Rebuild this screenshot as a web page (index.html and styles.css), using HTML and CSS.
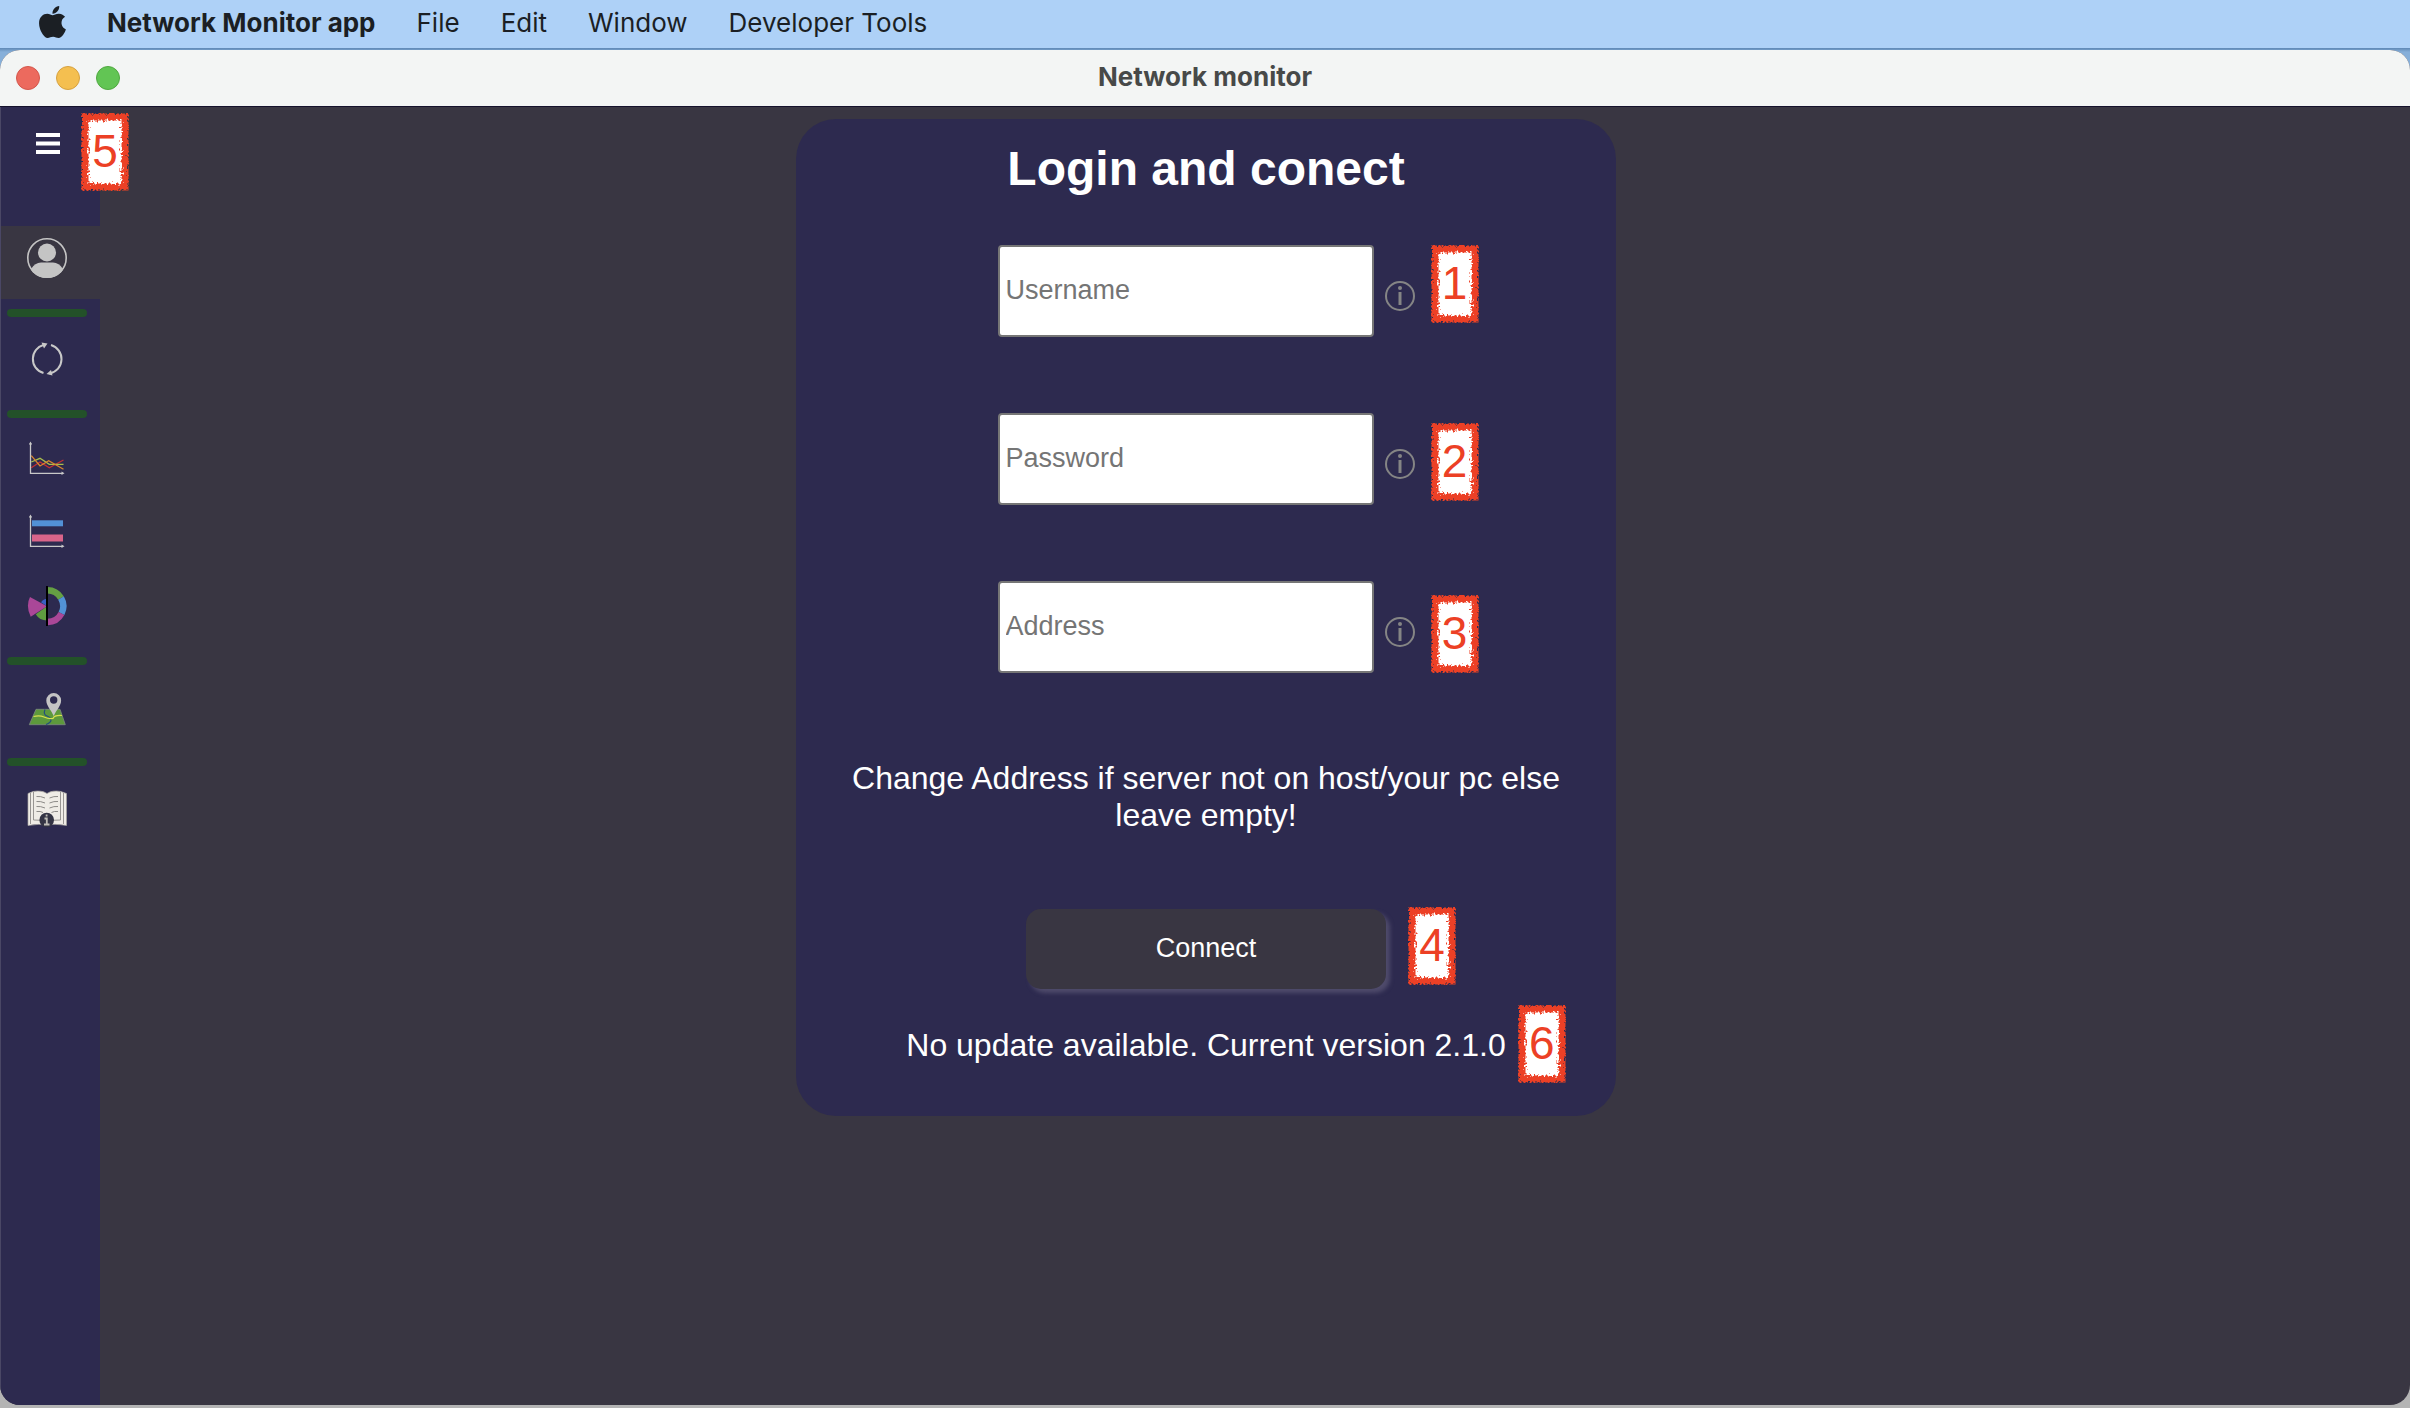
FILE: index.html
```html
<!DOCTYPE html>
<html lang="en">
<head>
<meta charset="utf-8">
<title>Network monitor</title>
<link rel="stylesheet" href="styles.css">
</head>
<body>
<svg class="defs" aria-hidden="true">
  <defs>
    <filter id="rough" x="-10%" y="-10%" width="120%" height="120%">
      <feTurbulence type="fractalNoise" baseFrequency="0.5" numOctaves="3" seed="4" result="n"/>
      <feDisplacementMap in="SourceGraphic" in2="n" scale="9" xChannelSelector="R" yChannelSelector="G"/>
    </filter>
    <symbol id="frame" viewBox="0 0 48 78">
      <g filter="url(#rough)">
        <rect x="4" y="4" width="40" height="70" fill="#fff"/>
        <rect x="4" y="4" width="40" height="70" fill="none" stroke="#ec4025" stroke-width="7"/>
      </g>
    </symbol>
    <symbol id="info" viewBox="0 0 30 30">
      <circle cx="15" cy="15" r="14" fill="none" stroke="#858585" stroke-width="2"/>
      <circle cx="15" cy="7" r="2" fill="#858585"/>
      <path d="M15 11v13" stroke="#858585" stroke-width="3"/>
    </symbol>
  </defs>
</svg>

<header class="menubar">
  <svg class="apple" viewBox="4 32 377 448" aria-hidden="true"><path fill="#1b1f24" d="M318.700 268.700c-.2-36.700 16.400-64.400 50-84.800-18.800-26.900-47.200-41.700-84.700-44.600-35.500-2.800-74.300 20.700-88.500 20.700-15 0-49.400-19.700-76.400-19.700C63.300 141.200 4 184.800 4 273.500q0 39.300 14.400 81.200c12.800 36.700 59 126.700 107.200 125.200 25.200-.6 43-17.900 75.800-17.900 31.800 0 48.300 17.900 76.400 17.900 48.600-.7 90.400-82.500 102.600-119.300-65.200-30.700-61.700-90-61.700-91.900zm-56.600-164.200c27.300-32.400 24.800-61.900 24-72.500-24.100 1.400-52 16.400-67.900 34.900-17.500 19.800-27.800 44.300-25.600 71.900 26.100 2 49.900-11.400 69.500-34.300z"/></svg>
  <button class="menu app-name" type="button">Network Monitor app</button>
  <button class="menu" type="button">File</button>
  <button class="menu" type="button">Edit</button>
  <button class="menu" type="button">Window</button>
  <button class="menu" type="button">Developer Tools</button>
</header>

<div class="window">
  <div class="titlebar">
    <div class="lights">
      <button class="light close" type="button" aria-label="Close"></button>
      <button class="light minimise" type="button" aria-label="Minimise"></button>
      <button class="light zoom" type="button" aria-label="Zoom"></button>
    </div>
    <div class="window-title">Network monitor</div>
  </div>

  <div class="workspace">
    <nav class="sidebar">
      <button class="toggle" type="button" aria-label="Toggle menu">
        <svg width="24" height="21" viewBox="0 0 24 21"><path d="M0 2h24M0 10.500h24M0 19h24" stroke="#fff" stroke-width="4"/></svg>
        <span class="badge badge-toggle"><svg><use href="#frame"/></svg><span>5</span></span>
      </button>
      <a class="item active" href="#account" aria-label="Account">
        <svg viewBox="0 0 40 40">
          <clipPath id="disc"><circle cx="20" cy="20" r="20"/></clipPath>
          <circle cx="20" cy="20" r="19.200" fill="none" stroke="#c4c4c4" stroke-width="1.600"/>
          <circle cx="20" cy="14.500" r="9" fill="#c4c4c4"/>
          <path clip-path="url(#disc)" fill="#c4c4c4" d="M4 31q4-6.500 10-6.500h12q6 0 10 6.500v9H4z"/>
        </svg>
      </a>
      <hr>
      <a class="item" href="#refresh" aria-label="Refresh">
        <svg viewBox="0 0 40 40" fill="none" stroke="#c8c8c8" stroke-width="2">
          <path d="M16.500 34C9.500 31.800 5.600 26 5.900 19.500 6 13 10.500 7.500 17 5.700M24 6c6.500 2 10.800 8 10.500 14.500C34.300 27.500 29.500 33 22.500 34.500"/>
          <path fill="#c8c8c8" stroke="none" d="M14.500 3.500l6 1-3.500 5zM25.500 36.500l-6-1.500 4.500-4z"/>
        </svg>
      </a>
      <hr>
      <a class="item" href="#line-chart" aria-label="Line chart">
        <svg viewBox="0 0 40 40" fill="none" stroke-width="1.300">
          <path stroke="#c22f33" d="M4.300 27.700L13 22l9.300 5.700L36.500 20"/>
          <path stroke="#a8bd4c" d="M4.300 22l8.700-3.700 9.300 6h14.200"/>
          <path stroke="#d8862f" d="M4.300 15.700L13 26l8.700-5.300 14.800 8.600"/>
          <path stroke="#c8c8c8" d="M3.500 3v30.300H36"/>
          <path fill="#c8c8c8" d="M1.800 4.500L3.500 1.500l1.700 3zM34.500 31.600l3 1.700-3 1.700z"/>
        </svg>
      </a>
      <a class="item" href="#bar-chart" aria-label="Bar chart">
        <svg viewBox="0 0 40 40" fill="none" stroke-width="1.300">
          <path fill="#5291d6" d="M5 7.300h31v6H5z"/>
          <path fill="#d9648a" d="M5 21.500h31v7H5z"/>
          <path stroke="#c8c8c8" d="M3.500 3v30.300H36"/>
          <path fill="#c8c8c8" d="M1.800 4.500L3.500 1.500l1.700 3zM34.500 31.600l3 1.700-3 1.700z"/>
        </svg>
      </a>
      <a class="item" href="#pie-chart" aria-label="Pie chart">
        <svg viewBox="0 0 40 40">
          <path fill="#3a5fc4" d="M20 20.300l-6-4q2.500-3.600 6-3.600z"/>
          <path fill="#5f9b40" d="M20 20.300L8.700 28.300Q12.500 34.500 20 34.500z"/>
          <path fill="#aa4798" d="M20 20.300L3 11Q-1.500 20 3.700 30.700z"/>
          <g fill="none" stroke-width="6.500">
            <path stroke="#65a043" d="M20.500 4.300A16 16 0 0 1 34 12"/>
            <path stroke="#5291d6" d="M34 12A16 16 0 0 1 34.500 27.500"/>
            <path stroke="#aa4798" d="M34.500 27.500A16 16 0 0 1 20.500 36"/>
          </g>
          <path d="M20 0v40" stroke="#000" stroke-width="2"/>
        </svg>
      </a>
      <hr>
      <a class="item" href="#map" aria-label="Map">
        <svg viewBox="0 0 40 40" fill="none">
          <path fill="#5d993c" stroke="#7c8a80" stroke-width=".8" d="M9 22.300h24l5.300 15.400h-36z"/>
          <path stroke="#24507c" stroke-width="1.200" d="M18 22.500q-2 5 2 6.500t4 4-5 4.500"/>
          <path stroke="#d8df50" stroke-width="1.200" d="M6.500 29.500q6-1.500 10.500.5t9 1.500q1-3.500 9-3"/>
          <path fill="#c4c4c4" fill-rule="evenodd" d="M26.700 29C24 22.500 19.300 19 19.300 13.500a7.400 7.400 0 0 1 14.800 0C34.100 19 29.500 22.500 26.700 29zm0-19.700a3.700 3.700 0 1 0 0 7.400 3.700 3.700 0 0 0 0-7.400z"/>
        </svg>
      </a>
      <hr>
      <a class="item" href="#manual" aria-label="Manual">
        <svg viewBox="0 0 40 40" fill="none">
          <path fill="#efece6" stroke="#a9a6a2" stroke-width=".7" d="M1 5.500l5-2q9-1.500 14 2 5-3.500 14-2l5.500 2V37.500Q27 35.500 20 37 12 35.500 1 37.500z"/>
          <path stroke="#8d8b88" stroke-width=".9" d="M3.500 5v31M6.500 4v28q7-1 13.500 3 6.500-4 13.500-3V4M36.500 5v31"/>
          <path stroke="#8d8b88" d="M9.500 8.500q4-.5 8.500 1.500M9.500 13.500q4-.5 8.500 1.500M9.500 18.500q4-.5 8.500 1.500M9.500 23.500q4-.5 6.500 1M31 8.500q-4-.5-8.500 1.500M31 13.500q-4-.5-8.500 1.500M31 18.500q-4-.5-8.500 1.500M31 23.500q-4-.5-6.500 1"/>
          <circle cx="19.700" cy="32" r="7.300" fill="#343444"/>
          <path stroke="#c0beb8" stroke-width="1.800" d="M17.500 30.500h2.300v6M17 36.500h5.500M19.600 26.500v2"/>
        </svg>
      </a>
    </nav>

    <main class="main">
      <form class="card">
        <h1>Login and conect</h1>
        <div class="fields">
          <div class="field">
            <input type="text" placeholder="Username" aria-label="Username">
            <svg class="info" role="img" aria-label="About the username"><use href="#info"/></svg>
            <span class="badge badge-user"><svg><use href="#frame"/></svg><span>1</span></span>
          </div>
          <div class="field">
            <input type="password" placeholder="Password" aria-label="Password">
            <svg class="info" role="img" aria-label="About the password"><use href="#info"/></svg>
            <span class="badge badge-password"><svg><use href="#frame"/></svg><span>2</span></span>
          </div>
          <div class="field">
            <input type="text" placeholder="Address" aria-label="Address">
            <svg class="info" role="img" aria-label="About the address"><use href="#info"/></svg>
            <span class="badge badge-address"><svg><use href="#frame"/></svg><span>3</span></span>
          </div>
        </div>
        <p class="hint">Change Address if server not on host/your pc else leave empty!</p>
        <div class="action">
          <button class="connect" type="button">Connect</button>
          <span class="badge badge-connect"><svg><use href="#frame"/></svg><span>4</span></span>
        </div>
        <p class="version">No update available. Current version 2.1.0
          <span class="badge badge-version"><svg><use href="#frame"/></svg><span>6</span></span>
        </p>
      </form>
    </main>
  </div>
</div>
</body>
</html>
```
FILE: styles.css
```css
* { box-sizing: border-box; }

body {
  margin: 0;
  min-height: 100vh;
  display: flex;
  flex-direction: column;
  padding-bottom: 3px;
  background: linear-gradient(#5f88b5 48px, #86afd9 52px, #86afd9 50%, #b4b4b4 50%);
  font-family: "Liberation Sans", Arial, sans-serif;
  color: #fff;
}

button { border: 0; padding: 0; background: none; color: inherit; font: inherit; }

.defs { position: absolute; width: 0; height: 0; }

/* System menu bar */
.menubar {
  display: flex;
  align-items: center;
  height: 48px;
  padding: 0 39px;
  gap: 41px;
  background: #aed1f7;
  color: #1b1f24;
  font-family: Inter, sans-serif;
  font-size: 26px;
}
.apple { width: 27px; height: 32px; margin-bottom: 4px; }
.menu { line-height: 32px; padding-bottom: 2px; }
.app-name { font-weight: 700; }

/* Window */
.window {
  flex: 1;
  display: flex;
  flex-direction: column;
  margin-top: 2px;
  border-radius: 20px;
  overflow: hidden;
  background: #393642;
}
.titlebar {
  display: grid;
  grid-template-columns: 1fr auto 1fr;
  align-items: center;
  height: 57px;
  padding: 0 16px;
  background: #f3f5f4;
  border-bottom: 1px solid #15122c;
}
.lights { display: flex; gap: 16px; }
.light { width: 24px; height: 24px; border-radius: 50%; border: 1px solid; }
.close { background: #ec6a5e; border-color: #d3574c; }
.minimise { background: #f4bf50; border-color: #d6a140; }
.zoom { background: #62c554; border-color: #50a840; }
.window-title {
  color: #474948;
  font: 700 26px/32px Inter, sans-serif;
  padding-bottom: 2px;
}

.workspace {
  flex: 1;
  display: grid;
  grid-template-columns: 99px 1fr 98px;
  border-left: 1px solid #4a4765;
}

/* Sidebar */
.sidebar { background: #2d2a4f; }
.toggle {
  position: relative;
  display: block;
  width: 100%;
  height: 119px;
  padding: 26px 0 0 35px;
  text-align: left;
}
.toggle > svg { display: block; height: 21px; margin-bottom: 72px; }
.item { display: block; height: 73px; padding: 12px 0 0 26px; }
.item svg { display: block; width: 40px; height: 40px; }
.active { background: #393642; }
.sidebar hr {
  width: 80px;
  height: 8px;
  margin: 10px 0 10px 6px;
  border: 0;
  border-radius: 4px;
  background: #235129;
}

/* Login card */
.main { display: flex; justify-content: center; align-items: flex-start; padding-top: 12px; }
.card {
  display: flex;
  flex-direction: column;
  align-items: center;
  width: 820px;
  max-width: 100%;
  padding: 22px 40px 52px;
  border-radius: 40px;
  background: #2d2a4f;
}
.card h1 { margin: 0 0 48px; font-size: 48px; line-height: 56px; }
.fields { display: flex; flex-direction: column; gap: 76px; }
.field { position: relative; display: flex; align-items: flex-end; gap: 11px; }
.field input {
  width: 376px;
  height: 92px;
  padding: 0 6px 2px;
  border: 2px solid #767676;
  border-radius: 4px;
  background: #fff;
  font: 27px "Liberation Sans", Arial, sans-serif;
}
.field input::placeholder { color: #757575; }
.info { width: 30px; height: 30px; margin-bottom: 26px; }
.hint, .version { font-size: 32px; line-height: 37px; text-align: center; }
.hint { margin: 87px 0 75px; }
.action { position: relative; }
.connect {
  display: block;
  width: 360px;
  height: 80px;
  padding-bottom: 2px;
  border-radius: 15px;
  background: #393642;
  box-shadow: 4px 4px 4px #4f4b6b;
  font-size: 27px;
}
.version { position: relative; margin: 38px 0 0; }

/* Numbered markers laid over the interface */
.badge {
  position: absolute;
  z-index: 1;
  display: grid;
  place-items: center;
  width: 48px;
  height: 78px;
  color: #ec4025;
  font-size: 46px;
  line-height: 52px;
}
.badge > * { grid-area: 1 / 1; }
.badge svg { width: 48px; height: 78px; }
.badge > span { z-index: 1; padding-bottom: 2px; }
.badge-toggle { left: 80px; top: 6px; }
.badge-user { left: 433px; top: 0; }
.badge-password { left: 433px; top: 10px; }
.badge-address { left: 433px; top: 14px; }
.badge-connect { left: 382px; top: -2px; }
.badge-version { left: calc(100% + 12px); top: -22px; }
```
